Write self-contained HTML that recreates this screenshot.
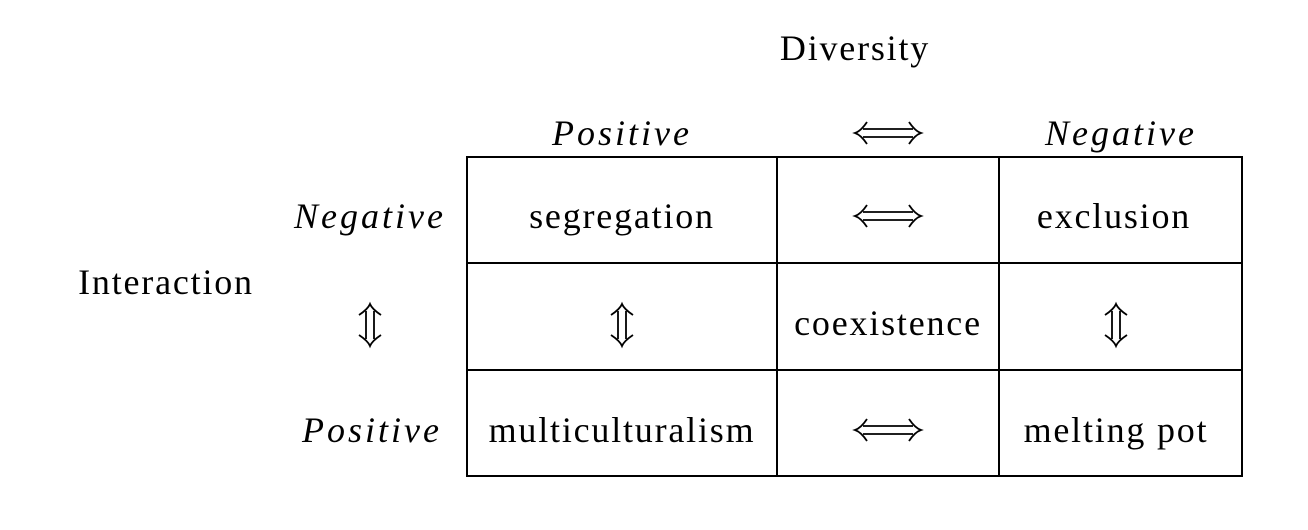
<!DOCTYPE html>
<html><head><style>
body{margin:0;width:1308px;height:530px;background:#fff;position:relative;overflow:hidden;font-family:"Liberation Serif",serif;font-size:36px;color:#000}
.t{position:absolute;white-space:nowrap;transform:translate(-50%,-50%);line-height:1;letter-spacing:1.8px}
.i{font-style:italic;letter-spacing:3px}
.h{position:absolute;background:#000;height:2px}
.v{position:absolute;background:#000;width:2px}
svg{position:absolute;overflow:visible}
</style></head><body>
<div class="t" style="left:855px;top:48px">Diversity</div>
<div class="t i" style="left:622px;top:133px">Positive</div>
<div class="t i" style="left:1121px;top:133px">Negative</div>
<div class="t i" style="left:370px;top:216px">Negative</div>
<div class="t i" style="left:372px;top:430px">Positive</div>
<div class="t" style="left:166px;top:282px">Interaction</div>
<div class="t" style="left:622px;top:216px">segregation</div>
<div class="t" style="left:1114px;top:216px">exclusion</div>
<div class="t" style="left:888px;top:323px">coexistence</div>
<div class="t" style="left:622px;top:430px">multiculturalism</div>
<div class="t" style="left:1116px;top:430px">melting pot</div>

<div class="h" style="left:467px;top:156px;width:776px"></div>
<div class="h" style="left:467px;top:262px;width:776px"></div>
<div class="h" style="left:467px;top:369px;width:776px"></div>
<div class="h" style="left:467px;top:475px;width:776px"></div>
<div class="v" style="left:466px;top:156px;height:321px"></div>
<div class="v" style="left:776px;top:156px;height:321px"></div>
<div class="v" style="left:998px;top:156px;height:321px"></div>
<div class="v" style="left:1241px;top:156px;height:321px"></div>

<svg width="0" height="0"><defs>
<g id="ha" fill="none" stroke="#000" stroke-width="1.8">
<path d="M8,-4H58M8,4H58"/>
<path d="M12,-11Q6,-2 0,0Q6,2 12,11"/>
<path d="M54,-11Q60,-2 66,0Q60,2 54,11"/>
</g>
<g id="va" fill="none" stroke="#000" stroke-width="1.8">
<path d="M-4,7V35M4,7V35"/>
<path d="M-11,11Q-2,5 0,0Q2,5 11,11"/>
<path d="M-11,31Q-2,37 0,42Q2,37 11,31"/>
</g>
</defs></svg>
<svg style="left:855px;top:133px" width="1" height="1"><use href="#ha"/></svg>
<svg style="left:855px;top:216px" width="1" height="1"><use href="#ha"/></svg>
<svg style="left:855px;top:430px" width="1" height="1"><use href="#ha"/></svg>
<svg style="left:370px;top:304px" width="1" height="1"><use href="#va"/></svg>
<svg style="left:622px;top:304px" width="1" height="1"><use href="#va"/></svg>
<svg style="left:1116px;top:304px" width="1" height="1"><use href="#va"/></svg>
</body></html>
